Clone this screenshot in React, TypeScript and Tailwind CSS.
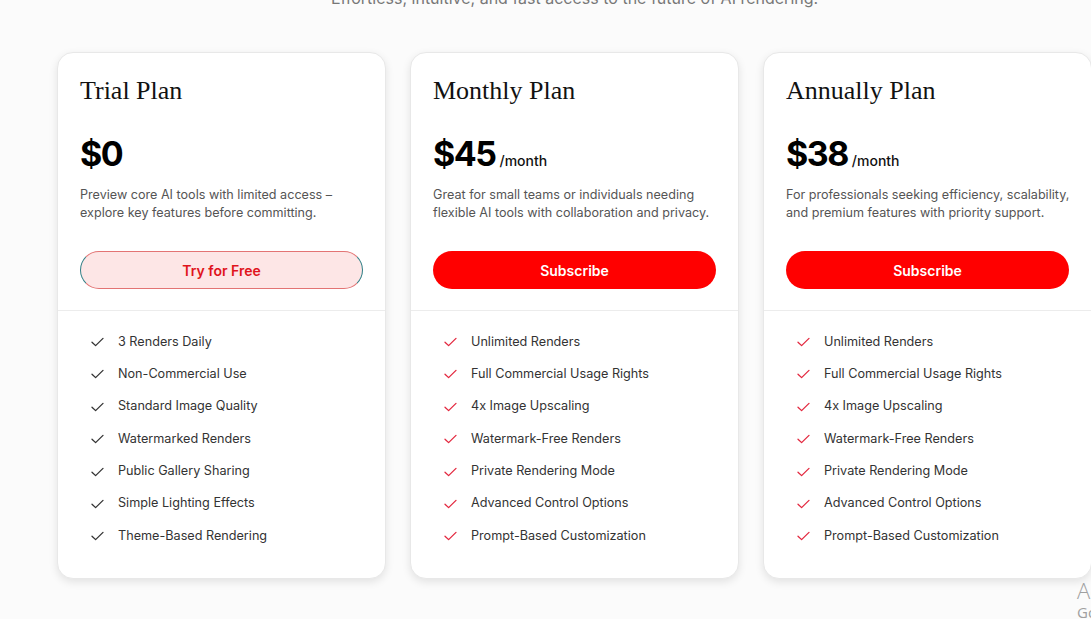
type Plan = {
  name: string;
  price: string;
  period?: string;
  blurb: string[];
  cta: string;
  trial?: boolean;
  features: string[];
};

const paidFeatures = [
  'Unlimited Renders',
  'Full Commercial Usage Rights',
  '4x Image Upscaling',
  'Watermark-Free Renders',
  'Private Rendering Mode',
  'Advanced Control Options',
  'Prompt-Based Customization',
];

const plans: Plan[] = [
  {
    name: 'Trial Plan',
    price: '$0',
    blurb: ['Preview core AI tools with limited access –', 'explore key features before committing.'],
    cta: 'Try for Free',
    trial: true,
    features: [
      '3 Renders Daily',
      'Non-Commercial Use',
      'Standard Image Quality',
      'Watermarked Renders',
      'Public Gallery Sharing',
      'Simple Lighting Effects',
      'Theme-Based Rendering',
    ],
  },
  {
    name: 'Monthly Plan',
    price: '$45',
    period: '/month',
    blurb: ['Great for small teams or individuals needing', 'flexible AI tools with collaboration and privacy.'],
    cta: 'Subscribe',
    features: paidFeatures,
  },
  {
    name: 'Annually Plan',
    price: '$38',
    period: '/month',
    blurb: ['For professionals seeking efficiency, scalability,', 'and premium features with priority support.'],
    cta: 'Subscribe',
    features: paidFeatures,
  },
];

function Tick({ red }: { red?: boolean }) {
  return (
    <svg width="13" height="10" viewBox="0 0 13 10" fill="none" className="mr-[14px] shrink-0">
      <path
        d="M1 5.2 L4.6 8.6 L12 1.4"
        stroke={red ? '#e3283f' : '#333'}
        strokeWidth="1.3"
        strokeLinecap="round"
        strokeLinejoin="round"
      />
    </svg>
  );
}

function PlanCard({ plan }: { plan: Plan }) {
  return (
    <div className="w-[329px] shrink-0 bg-white rounded-2xl border border-[#e8e8e8] shadow-[0_3px_8px_rgba(0,0,0,0.10)]">
      <div className="px-[22px] pt-[22px] pb-[21px] border-b border-[#ececec]">
        <h3 className="text-[26px] leading-8 text-[#111] font-['Liberation_Serif',serif]">{plan.name}</h3>
        <div className="mt-[27px] flex items-baseline gap-1 h-10">
          <span className="text-[34px] leading-10 font-bold text-black tracking-[-1.5px]">{plan.price}</span>
          {plan.period && <span className="text-[14px] font-medium text-[#111]">{plan.period}</span>}
        </div>
        <p className="mt-3 text-[12.6px] leading-[18px] text-[#555] whitespace-nowrap">
          {plan.blurb[0]}
          <br />
          {plan.blurb[1]}
        </p>
        <button
          className={
            plan.trial
              ? 'mt-[29px] w-full h-[38px] rounded-full bg-[#fde6e6] border border-x-[#2d7d84] border-y-[#e37474] text-[#e0141c] text-[14px] font-semibold'
              : 'mt-[29px] w-full h-[38px] rounded-full bg-[#ff0000] text-white text-[14px] font-semibold'
          }
        >
          {plan.cta}
        </button>
      </div>
      <ul className="pl-[33px] pt-[21px] pb-[32px] flex flex-col gap-[12.4px]">
        {plan.features.map((f) => (
          <li key={f} className="flex items-center h-5 text-[12.65px] text-[#333] whitespace-nowrap">
            <Tick red={!plan.trial} />
            {f}
          </li>
        ))}
      </ul>
    </div>
  );
}

export default function App() {
  return (
    <div className="relative w-[1091px] h-[619px] overflow-hidden bg-[#fbfbfb] font-['Inter',sans-serif]">
      <div className="w-[1035px] ml-[57px]">
        <p className="-mt-[14px] h-6 text-[16px] leading-6 text-center text-[#777]">
          Effortless, intuitive, and fast access to the future of AI rendering.
        </p>
        <div className="mt-[42px] flex gap-6">
          {plans.map((p) => (
            <PlanCard key={p.name} plan={p} />
          ))}
        </div>
      </div>
      <div className="absolute left-[1077px] top-[578px] text-[#a0a0a0] font-['Open_Sans',sans-serif] whitespace-nowrap">
        <div className="text-[22px] leading-6 font-light">Activate Windows</div>
        <div className="text-[15px] leading-5">Go to Settings to activate Windows.</div>
      </div>
    </div>
  );
}
